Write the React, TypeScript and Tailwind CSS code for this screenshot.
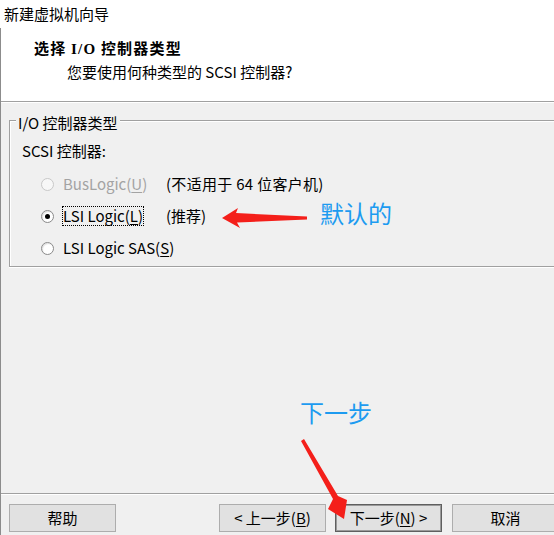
import React from "react";

function Radio({ checked, disabled }: { checked?: boolean; disabled?: boolean }) {
  return (
    <div
      className={
        "w-[13px] h-[13px] rounded-full border flex items-center justify-center shrink-0 " +
        (disabled
          ? "border-[#c8c8c8] bg-[#f7f7f7]"
          : "border-[#8a8a8a] bg-white shadow-[inset_1px_1px_1px_rgba(0,0,0,0.12)]")
      }
    >
      {checked && <div className="w-[5px] h-[5px] rounded-full bg-black" />}
    </div>
  );
}

function Btn({ children, primary, className }: { children: React.ReactNode; primary?: boolean; className?: string }) {
  return (
    <div
      className={
        "w-[107px] h-[28px] shrink-0 flex items-center justify-center bg-[#e1e1e1] " +
        (primary
          ? "border border-[#5f5f5f] shadow-[inset_0_0_0_1px_#9a9a9a] "
          : "border border-[#adadad] ") +
        (className ?? "")
      }
    >
      {children}
    </div>
  );
}

export default function App() {
  return (
    <div className="relative w-[554px] h-[535px] overflow-hidden bg-[#f0f0f0] text-black text-[15px] leading-[20px] font-['Noto_Sans_CJK_SC',sans-serif] flex flex-col">
      <div className="h-[28px] shrink-0 bg-white pl-[4px] flex items-center">新建虚拟机向导</div>
      <div className="flex-1 flex flex-col border-l border-[#8c8c8c]">
        <div className="h-[73px] shrink-0 bg-white pl-[33px] pt-[10px]">
          <div className="font-bold tracking-[1.2px]">
            选择 <span className="font-['Liberation_Serif',serif]">I/O</span> 控制器类型
          </div>
          <div className="mt-[3px] pl-[33px]">您要使用何种类型的 SCSI 控制器?</div>
        </div>
        <div className="h-px shrink-0 bg-[#a0a0a0]" />
        <div className="h-px shrink-0 bg-white" />
        <div className="flex-1">
          <fieldset className="ml-[8px] mt-[4px] w-[580px] border border-[#a0a0a0] shadow-[inset_1px_1px_0_#fff,0_1px_0_#fff] pl-[12px] pb-[2px]">
            <legend className="-ml-[6px] px-[2px] pt-[6px] bg-[#f0f0f0]">I/O 控制器类型</legend>
            <div className="mt-[8px]">SCSI 控制器:</div>
            <div className="mt-[7px] flex flex-col">
              <div className="h-[32px] flex items-center pl-[19px]">
                <div className="w-[125px] flex items-center shrink-0">
                  <Radio disabled />
                  <span className="ml-[9px] text-[#a3a3a3]">
                    BusLogic(<span className="underline underline-offset-2">U</span>)
                  </span>
                </div>
                <span className="tracking-[0.3px]">(不适用于 64 位客户机)</span>
              </div>
              <div className="h-[32px] flex items-center pl-[19px]">
                <div className="w-[125px] flex items-center shrink-0">
                  <Radio checked />
                  <span className="ml-[8px] border border-dotted border-black leading-[18px]">
                    LSI Logic(<span className="underline underline-offset-2">L</span>)
                  </span>
                </div>
                <span>(推荐)</span>
              </div>
              <div className="h-[32px] flex items-center pl-[19px]">
                <div className="flex items-center shrink-0">
                  <Radio />
                  <span className="ml-[9px]">
                    LSI Logic SAS(<span className="underline underline-offset-2">S</span>)
                  </span>
                </div>
              </div>
            </div>
          </fieldset>
        </div>
        <div className="h-px shrink-0 bg-[#a0a0a0]" />
        <div className="h-px shrink-0 bg-white" />
        <div className="h-[40px] shrink-0 pt-[9px] flex">
          <Btn className="ml-[8px]">帮助</Btn>
          <Btn className="ml-[103px]">
            &lt; 上一步(<span className="underline underline-offset-2">B</span>)
          </Btn>
          <Btn primary className="ml-[9px]">
            下一步(<span className="underline underline-offset-2">N</span>) &gt;
          </Btn>
          <Btn className="ml-[10px]">取消</Btn>
        </div>
      </div>

      {/* annotation overlay */}
      <svg className="absolute left-0 top-0 pointer-events-none" width="554" height="535" viewBox="0 0 554 535">
        <polygon
          fill="#f41f1a"
          points="307,216.5 236,213 238,208 222,218 240,228 237,222.5 307,219.5"
        />
        <polygon
          fill="#f41f1a"
          points="301,441 304,439 338,496 347,500 344,519 328,509 333,499"
        />
      </svg>
      <span className="absolute left-[320px] top-[201px] text-[24px] leading-[24px] text-[#1d9bf0]">默认的</span>
      <span className="absolute left-[300px] top-[400px] text-[24px] leading-[24px] text-[#1d9bf0]">下一步</span>
    </div>
  );
}
